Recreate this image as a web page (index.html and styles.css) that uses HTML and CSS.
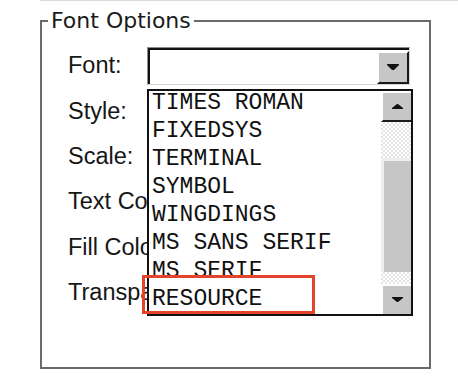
FILE: index.html
```html
<!DOCTYPE html>
<html lang="en">
<head>
  <meta charset="UTF-8">
  <meta name="viewport" content="width=device-width, initial-scale=1.0">
  <title>Font Options</title>
  <link rel="stylesheet" href="styles.css">
</head>
<body>

<div class="topline"></div>

<fieldset class="options">
  <legend>Font Options</legend>

  <div class="rows">
    <div class="row">
      <span class="label">Font:</span>
      <div class="combo">
        <div class="select">
          <span class="drop-btn">
            <svg width="12" height="6" viewBox="0 0 12 6"><polygon points="0,0 12,0 12,1 7,6 5,6 0,1" fill="#111"/></svg>
          </span>
        </div>

        <div class="listbox">
          <ul class="items">
            <li>TIMES ROMAN</li>
            <li>FIXEDSYS</li>
            <li>TERMINAL</li>
            <li>SYMBOL</li>
            <li>WINGDINGS</li>
            <li>MS SANS SERIF</li>
            <li>MS SERIF</li>
            <li>RESOURCE</li>
          </ul>
          <div class="scrollbar">
            <span class="sb-btn">
              <svg width="11" height="5" viewBox="0 0 11 5"><polygon points="5,0 6,0 11,4 11,5 0,5 0,4" fill="#111"/></svg>
            </span>
            <span class="sb-track t1"></span>
            <span class="sb-thumb"></span>
            <span class="sb-track t2"></span>
            <span class="sb-btn">
              <svg width="11" height="5" viewBox="0 0 11 5"><polygon points="0,0 11,0 11,1 6,5 5,5 0,1" fill="#111"/></svg>
            </span>
          </div>
          <div class="mark"></div>
        </div>
      </div>
    </div>
    <div class="row"><span class="label">Style:</span></div>
    <div class="row"><span class="label">Scale:</span></div>
    <div class="row"><span class="label">Text Color:</span></div>
    <div class="row"><span class="label">Fill Color:</span></div>
    <div class="row"><span class="label">Transparency:</span></div>
  </div>
</fieldset>

</body>
</html>
```

FILE: styles.css
```css
* {
  box-sizing: border-box;
}

body {
  margin: 0;
  background: #fff;
  color: #161616;
  font-family: 'Liberation Sans', Arial, sans-serif;
}

.topline {
  height: 1px;
  margin-left: 40px;
  background: #dcdcdc;
}

.options {
  width: 391px;
  margin: 7px 0 0 40px;
  padding: 0 0 52px 0;
  border: 2px solid #6a6a6a;
}

.options legend {
  margin-left: 6px;
  padding: 0 3px;
  font-family: 'DejaVu Sans', Verdana, sans-serif;
  font-size: 22px;
  line-height: 26px;
  color: #1a1a1a;
}

.rows {
  padding: 9px 0 0 26px;
}

.row {
  display: grid;
  grid-template-columns: 79px 263px;
  align-items: center;
  height: 45.4px;
}

.label {
  font-size: 23.5px;
  white-space: nowrap;
}

.combo {
  position: relative;
}

.select {
  height: 38px;
  display: flex;
  justify-content: flex-end;
  padding: 3px 0 1px 0;
  background: #fff;
  border: 1px solid;
  border-color: #8c8c8c #d6d6d6 #d6d6d6 #8c8c8c;
  box-shadow: inset 2px 2px 0 #111;
}

.drop-btn,
.sb-btn {
  display: flex;
  align-items: center;
  justify-content: center;
  background: #c6c6c6;
  border: 2px solid;
  border-color: #fff #1a1a1a #1a1a1a #fff;
}

.drop-btn {
  width: 32px;
  height: 33px;
}

/* opened dropdown list, lies over the other rows */
.listbox {
  position: absolute;
  z-index: 2;
  top: 42px;
  left: 0;
  width: 266px;
  height: 227px;
  display: flex;
  background: #fff;
  border: 2px solid #111;
}

.items {
  flex: 1;
  list-style: none;
  margin: -2px 0 0 0;
  padding: 0 0 0 3px;
  font-family: 'Liberation Mono', 'Courier New', monospace;
  font-size: 23px;
  line-height: 28px;
  color: #111;
  white-space: nowrap;
  overflow: hidden;
}

.scrollbar {
  width: 30px;
  display: flex;
  flex-direction: column;
}

.sb-btn {
  height: 31px;
  border-right: none;
}

.sb-btn:last-child {
  height: 30px;
  border-bottom: none;
}

.sb-track {
  background: repeating-conic-gradient(#e4e4e4 0 25%, #fff 0 50%) 0 0 / 4px 4px;
}

.t1 {
  height: 36px;
}

.t2 {
  height: 12px;
}

.sb-thumb {
  height: 114px;
  background: #c6c6c6;
  border-top: 3px solid #eee;
  border-left: 3px solid #eee;
}

.mark {
  position: absolute;
  left: -7px;
  top: 184px;
  width: 173px;
  height: 39px;
  border: 3px solid #e4442c;
}
```
